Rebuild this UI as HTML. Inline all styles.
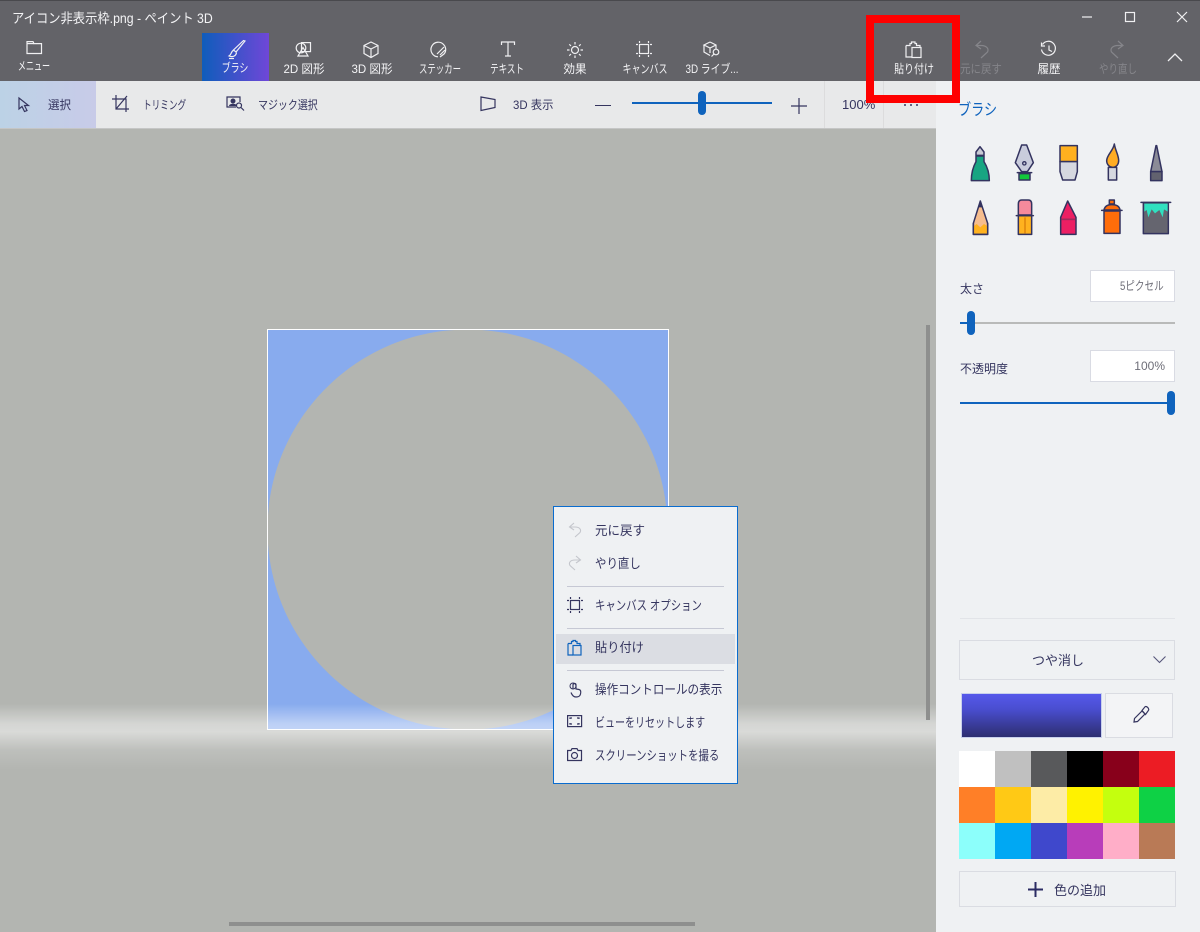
<!DOCTYPE html>
<html lang="ja"><head><meta charset="utf-8"><title>ペイント 3D</title>
<style>
html,body{margin:0;padding:0;width:1200px;height:932px;overflow:hidden;background:#b3b5b1}
body{position:relative;font-family:"Liberation Sans","Noto Sans CJK JP",sans-serif;font-size:12px;color:#35355f}
.a{position:absolute}
.t{position:absolute;white-space:nowrap;line-height:14px}
.s{transform-origin:0 50%}
svg{position:absolute;overflow:visible;fill:none}
.w{color:#f4f4f6}
.w2{stroke:#f0f0f2;stroke-width:1.2}
.d{stroke:#35355f;stroke-width:1.2}
.m{font-size:13px;color:#35355f;left:595px;transform-origin:0 50%}
.sw{position:absolute;width:36px;height:36px}
.sep{position:absolute;left:567px;width:157px;height:1px;background:#c6c8d4}
.o{stroke:#33335f;stroke-width:4.500;stroke-linejoin:round;stroke-linecap:round}
</style></head><body>

<!-- canvas -->
<svg style="left:0;top:128px" width="936" height="804" viewBox="0 128 936 804">
<defs>
<linearGradient id="glow" x1="0" y1="0" x2="0" y2="1">
<stop offset="0" stop-color="#fff" stop-opacity="0"/>
<stop offset=".3" stop-color="#fff" stop-opacity=".44"/>
<stop offset=".42" stop-color="#fff" stop-opacity=".5"/>
<stop offset=".7" stop-color="#fff" stop-opacity=".14"/>
<stop offset="1" stop-color="#fff" stop-opacity="0"/>
</linearGradient>
</defs>
<rect x="0" y="128" width="936" height="804" fill="#b3b5b1"/>
<path fill-rule="evenodd" fill="#88abee" d="M267 329H669V730H267ZM467.500 329.500C357 329.500 267.500 419 267.500 529.500S357 729.500 467.500 729.500S667.500 640 667.500 529.500S578 329.500 467.500 329.500Z"/>
<rect x="0" y="704" width="936" height="66" fill="url(#glow)"/>
<rect x="267.500" y="329.500" width="401" height="400" stroke="#fff" stroke-width="1"/>
<rect x="926" y="325" width="4" height="395" fill="#8e8f8e"/>
<rect x="229" y="922" width="466" height="4" fill="#8e8f8e"/>
</svg>

<!-- title / tab bar -->
<div class="a" style="left:0;top:0;width:1200px;height:81px;background:#636368;border-top:1px solid #49494d;box-sizing:border-box"></div>
<div class="t w s" style="left:12px;top:10px;font-size:13.500px;line-height:17px;transform:scaleX(.91)">アイコン非表示枠.png - ペイント 3D</div>

<svg style="left:1000px;top:0" width="200" height="34">
<path class="w2" d="M82 17H92"/><rect class="w2" x="125.500" y="12.500" width="9" height="9"/><path class="w2" d="M177 12L187 22M187 12L177 22"/>
</svg>

<!-- menu -->
<svg style="left:26px;top:41px" width="18" height="14"><path class="w2" d="M1 .6H7L8 2.600H15.500V12.500H1Z"/><path class="w2" d="M1 2.600H8"/></svg>
<div class="t w" style="left:34px;top:59px;transform:translateX(-50%) scaleX(.67)">メニュー</div>

<!-- brush active -->
<div class="a" style="left:202px;top:33px;width:67px;height:48px;background:linear-gradient(90deg,#0f5dbb,#6f47d8)"></div>
<svg style="left:226px;top:40px" width="22" height="22"><path class="w2" d="M19 1L10 12L7.500 10L17.500 .5ZM7.500 10.500C5 11 6 14 3 16C7 17.500 10 16 10.500 12.500"/><path class="w2" d="M3 18.500H8"/></svg>
<div class="t w" style="left:235px;top:61px;transform:translateX(-50%) scaleX(.75)">ブラシ</div>

<!-- 2D -->
<svg style="left:295px;top:42px" width="18" height="16"><circle class="w2" cx="6" cy="6" r="4.800"/><rect class="w2" x="6.500" y=".6" width="9" height="9"/><path class="w2" d="M8 5.500L13 14H3Z"/></svg>
<div class="t w" style="left:304px;top:62px;transform:translateX(-50%) scaleX(.96)">2D 図形</div>
<!-- 3D -->
<svg style="left:363px;top:41px" width="16" height="18"><path class="w2" d="M8 1L15 4.500V12.500L8 16.500L1 12.500V4.500ZM1 4.500L8 8L15 4.500M8 8V16.500"/></svg>
<div class="t w" style="left:372px;top:62px;transform:translateX(-50%) scaleX(.96)">3D 図形</div>
<!-- sticker -->
<svg style="left:430px;top:41px" width="18" height="18"><path class="w2" d="M14 4A7.300 7.300 0 1 0 8 15.800M14 4C16.500 7 16 11 14 13L10 16"/><path class="w2" d="M7 13L14 6M10 14L15 9"/></svg>
<div class="t w" style="left:440px;top:62px;transform:translateX(-50%) scaleX(.7)">ステッカー</div>
<!-- text -->
<svg style="left:500px;top:41px" width="16" height="16"><path class="w2" d="M1.500 4V1H14.500V4M8 1V15M5 15H11"/></svg>
<div class="t w" style="left:507px;top:62px;transform:translateX(-50%) scaleX(.71)">テキスト</div>
<!-- effects -->
<svg style="left:566px;top:41px" width="18" height="18"><circle class="w2" cx="9" cy="9" r="3.500"/><path class="w2" d="M9 1V3.500M9 14.500V17M1 9H3.500M14.500 9H17M3.300 3.300L5 5M13 13L14.700 14.700M14.700 3.300L13 5M5 13L3.300 14.700"/></svg>
<div class="t w" style="left:575px;top:62px;transform:translateX(-50%) scaleX(.96)">効果</div>
<!-- canvas tool -->
<svg style="left:636px;top:41px" width="16" height="16"><rect class="w2" x="3.500" y="3.500" width="9" height="9"/><path class="w2" d="M3.500 0V2M12.500 0V2M3.500 14V16M12.500 14V16M0 3.500H2M0 12.500H2M14 3.500H16M14 12.500H16"/></svg>
<div class="t w" style="left:644.500px;top:62px;transform:translateX(-50%) scaleX(.75)">キャンバス</div>
<!-- 3D library -->
<svg style="left:703px;top:41px" width="18" height="18"><path class="w2" d="M7 1L13 4V8M1 4V11L7 14.500M7 1L1 4L7 7L13 4M7 7V12"/><circle class="w2" cx="13" cy="11" r="2.800"/><path class="w2" d="M11 13L8.500 15.500"/></svg>
<div class="t w" style="left:712px;top:62px;transform:translateX(-50%) scaleX(.82)">3D ライブ...</div>

<!-- right tools -->
<svg style="left:905px;top:41px" width="18" height="18"><path class="w2" d="M1 4.500H5V2.500H6.500V1H10V2.500H11.500V4.500H15V6M7 16H1V4.500"/><rect class="w2" x="7" y="6.500" width="9" height="10"/></svg>
<div class="t w" style="left:914px;top:62px;transform:translateX(-50%) scaleX(.83)">貼り付け</div>
<svg style="left:973px;top:40px" width="18" height="20"><path d="M8 1L3 5.500L8 9M3 5.500H8C14 5.500 16 9 14.500 12L8 18" stroke="#85858a" stroke-width="1.200"/></svg>
<div class="t" style="left:981px;top:62px;color:#85858a;transform:translateX(-50%) scaleX(.87)">元に戻す</div>
<svg style="left:1040px;top:41px" width="18" height="18"><path class="w2" d="M2.500 3.500A7 7 0 1 1 1.500 8.500M1.500 1.500V5H5M9 4.500V9L12 10.500"/></svg>
<div class="t w" style="left:1049px;top:62px;transform:translateX(-50%) scaleX(.96)">履歴</div>
<svg style="left:1108px;top:40px" width="18" height="20"><path d="M10 1L15 5.500L10 9M15 5.500H10C4 5.500 2 9 3.500 12L10 18" stroke="#85858a" stroke-width="1.200"/></svg>
<div class="t" style="left:1118px;top:62px;color:#85858a;transform:translateX(-50%) scaleX(.79)">やり直し</div>
<svg style="left:1167px;top:52px" width="16" height="10"><path d="M1 9L8 2L15 9" stroke="#f0f0f2" stroke-width="1.300"/></svg>

<!-- toolbar -->
<div class="a" style="left:0;top:81px;width:936px;height:47px;background:#e8e9ea;border-bottom:1px solid #c5c6c6"></div>
<div class="a" style="left:0;top:81px;width:96px;height:47px;background:linear-gradient(90deg,#bcd2e6,#c8cbe8)"></div>
<svg style="left:18px;top:97px" width="12" height="16"><path class="d" d="M1 1V12L4 9.500L6.500 14.500L9 13.500L6.500 8.500H10.500Z"/></svg>
<div class="t s" style="left:48px;top:98px;transform:scaleX(.96)">選択</div>
<svg style="left:112px;top:95px" width="18" height="18"><path class="d" d="M4 0V14H17M0 4H14V17M4 14L15 1"/></svg>
<div class="t s" style="left:143px;top:98px;transform:scaleX(.72)">トリミング</div>
<svg style="left:226px;top:96px" width="19" height="16"><path class="d" d="M10 11H1V1H14V6"/><circle cx="7" cy="5" r="2.500" fill="#35355f"/><path d="M3 10C3 7 11 7 11 10Z" fill="#35355f"/><circle class="d" cx="13" cy="9.500" r="2.500"/><path class="d" d="M15 11.500L18 14.500"/></svg>
<div class="t s" style="left:258px;top:98px;transform:scaleX(.83)">マジック選択</div>
<svg style="left:480px;top:96px" width="17" height="16"><path class="d" d="M1 1L15 3.500V11.500L1 14.500Z"/></svg>
<div class="t s" style="left:513px;top:98px;transform:scaleX(.95)">3D 表示</div>
<div class="a" style="left:595px;top:105px;width:16px;height:1px;background:#35355f"></div>
<div class="a" style="left:632px;top:102px;width:140px;height:2px;background:#0f63bd"></div>
<div class="a" style="left:698px;top:91px;width:8px;height:24px;border-radius:4px;background:#0f63bd"></div>
<svg style="left:791px;top:98px" width="16" height="16"><path d="M8 0V16M0 8H16" stroke="#35355f" stroke-width="1.200"/></svg>
<div class="a" style="left:824px;top:81px;width:1px;height:47px;background:#dcdcdd"></div>
<div class="t" style="left:842px;top:98px;font-size:13px">100%</div>
<div class="a" style="left:883px;top:81px;width:1px;height:47px;background:#dcdcdd"></div>
<svg style="left:904px;top:104px" width="14" height="3"><path d="M0 1H2M6 1H8M12 1H14" stroke="#35355f" stroke-width="1.600"/></svg>

<!-- side panel -->
<div class="a" style="left:936px;top:81px;width:264px;height:851px;background:#eff1f3"></div>
<div class="t s" style="left:958px;top:101px;font-size:16px;line-height:20px;color:#0f63bd;transform:scaleX(.82)">ブラシ</div>

<!-- brushes: drawn in 3x coordinates -->
<svg style="left:940px;top:130px" width="260" height="120" viewBox="0 0 780 360">
 <path class="o" fill="#18a582" d="M108 78H132V95Q148 120 148 152H94Q94 120 108 95Z"/><path class="o" fill="#c8cad4" d="M108 76V66L120 50L132 66V76Z"/>
 <path class="o" fill="#c9ccdc" d="M245 45H260L280 98L262 125H245L226 98Z"/><circle cx="253" cy="100" r="5" stroke="#33335f" stroke-width="4"/><path class="o" d="M232 128H275"/><path class="o" fill="#12c83c" d="M237 131H270V150H237Z"/>
 <path class="o" fill="#ffb01f" d="M360 47H412V95H360Z"/><path class="o" fill="#d6d8e0" d="M360 95H412V125L405 150H368L360 125Z"/>
 <path class="o" fill="#ffac24" d="M523 42C520 62 500 75 500 92C500 105 510 112 518 112C530 112 536 102 536 92C536 75 526 62 523 42Z"/><path class="o" fill="#d6d8e0" d="M505 112H530V150H505Z"/>
 <path class="o" fill="#8b8b97" d="M648 47L632 125H666L650 47Z"/><path class="o" fill="#62626f" d="M632 125H666V152H632Z"/>
 <path class="o" fill="#f6bd8e" d="M121 213L100 280V313H143V280Z"/><path fill="#ffb21f" d="M102 288L110 282L121 292L132 282L141 288V311H102Z"/><path fill="#33335f" d="M115 232L121 213L127 232Z"/><path class="o" d="M100 280V313H143V280"/>
 <path class="o" fill="#f58a9c" d="M235 255V222Q235 210 245 210H265Q275 210 275 222V255Z"/><path class="o" fill="#ffb21f" d="M235 257H275V313H235Z"/><path class="o" d="M229 257H280"/><path d="M255 262V310" stroke="#e2890f" stroke-width="5"/>
 <path class="o" fill="#ec1f63" d="M383 213L362 262V313H408V262Z"/><path d="M364 268H406" stroke="#a02b5b" stroke-width="5"/>
 <path class="o" fill="#ff6d0a" d="M508 210H523V222H508Z"/><path class="o" fill="#ff6d0a" d="M492 240Q495 224 515 224Q538 224 540 240Z"/><path class="o" fill="#ff6d0a" d="M492 243H540V310H492Z"/><path class="o" d="M485 241H546"/>
 <path class="o" fill="#65656f" d="M610 218H685V311H610Z"/><path fill="#30e0c0" d="M613 221H683V245L672 238L668 262L658 240L645 250L635 238L625 262L620 240L613 245Z"/><path class="o" d="M603 217H692"/>
</svg>

<div class="t" style="left:960px;top:282px">太さ</div>
<div class="a" style="left:1090px;top:270px;width:85px;height:32px;background:#fff;border:1px solid #d9dbe3;box-sizing:border-box"></div>
<div class="t" style="right:36px;top:279px;color:#6e6e78;transform-origin:100% 50%;transform:scaleX(.8)">5ピクセル</div>
<div class="a" style="left:960px;top:322px;width:215px;height:2px;background:#b9bab9"></div>
<div class="a" style="left:960px;top:322px;width:10px;height:2px;background:#0f63bd"></div>
<div class="a" style="left:967px;top:311px;width:8px;height:24px;border-radius:4px;background:#0f63bd"></div>

<div class="t" style="left:960px;top:362px">不透明度</div>
<div class="a" style="left:1090px;top:350px;width:85px;height:32px;background:#fff;border:1px solid #d9dbe3;box-sizing:border-box"></div>
<div class="t" style="right:35px;top:359px;color:#6e6e78">100%</div>
<div class="a" style="left:960px;top:402px;width:215px;height:2px;background:#0f63bd"></div>
<div class="a" style="left:1167px;top:391px;width:8px;height:24px;border-radius:4px;background:#0f63bd"></div>

<div class="a" style="left:960px;top:618px;width:215px;height:1px;background:#e2e4e8"></div>

<div class="a" style="left:959px;top:640px;width:216px;height:40px;border:1px solid #dadce2;box-sizing:border-box"></div>
<div class="t" style="left:1032px;top:654px;font-size:13px">つや消し</div>
<svg style="left:1153px;top:656px" width="13" height="8"><path d="M.5 .5L6.500 6.500L12.500 .5" stroke="#55557a" stroke-width="1.100"/></svg>

<div class="a" style="left:961px;top:693px;width:141px;height:45px;box-sizing:border-box;border:1px solid #c8d0ec;background:linear-gradient(180deg,#5558ea,#4a4ed0 35%,#2d2e70)"></div>
<div class="a" style="left:1105px;top:693px;width:68px;height:45px;box-sizing:border-box;border:1px solid #dadce2;background:#f3f4f6"></div>
<svg style="left:1133px;top:706px" width="17" height="17"><path class="d" d="M1 16L1.500 12.500L9 5L12 8L4.500 15.500Z"/><path d="M9 4.500L12 .8C13.500 -.4 16.500 2.500 15.500 4.300L12.500 8.500Z" stroke="#35355f" stroke-width="1.200"/></svg>

<div class="sw" style="left:959px;top:751px;background:#fff"></div>
<div class="sw" style="left:995px;top:751px;background:#c0c0c0"></div>
<div class="sw" style="left:1031px;top:751px;background:#58595b"></div>
<div class="sw" style="left:1067px;top:751px;background:#000"></div>
<div class="sw" style="left:1103px;top:751px;background:#88001b"></div>
<div class="sw" style="left:1139px;top:751px;background:#ec1c24"></div>
<div class="sw" style="left:959px;top:787px;background:#ff7f27"></div>
<div class="sw" style="left:995px;top:787px;background:#ffc915"></div>
<div class="sw" style="left:1031px;top:787px;background:#fdeca6"></div>
<div class="sw" style="left:1067px;top:787px;background:#fff200"></div>
<div class="sw" style="left:1103px;top:787px;background:#c4ff0e"></div>
<div class="sw" style="left:1139px;top:787px;background:#0ed145"></div>
<div class="sw" style="left:959px;top:823px;background:#8cfffb"></div>
<div class="sw" style="left:995px;top:823px;background:#00a8f3"></div>
<div class="sw" style="left:1031px;top:823px;background:#3f48cc"></div>
<div class="sw" style="left:1067px;top:823px;background:#b83dba"></div>
<div class="sw" style="left:1103px;top:823px;background:#ffaec8"></div>
<div class="sw" style="left:1139px;top:823px;background:#b97a56"></div>

<div class="a" style="left:959px;top:871px;width:217px;height:36px;border:1px solid #dadce2;box-sizing:border-box"></div>
<svg style="left:1028px;top:882px" width="15" height="15"><path d="M7.500 0V15M0 7.500H15" stroke="#2b2b63" stroke-width="2"/></svg>
<div class="t" style="left:1054px;top:884px;font-size:13px">色の追加</div>

<!-- context menu -->
<div class="a" style="left:553px;top:506px;width:185px;height:278px;box-sizing:border-box;background:#eff1f3;border:1px solid #0a6ccf"></div>
<svg style="left:568px;top:522px" width="14" height="16"><path d="M6 1L1.500 5L6 8M1.500 5H7C12 5 13.500 8 12 10.500L7 15" stroke="#c4c6cc" stroke-width="1.100"/></svg>
<div class="t m" style="top:524px;transform:scaleX(.96)">元に戻す</div>
<svg style="left:568px;top:555px" width="14" height="16"><path d="M8 1L12.500 5L8 8M12.500 5H7C2 5 .5 8 2 10.500L7 15" stroke="#c4c6cc" stroke-width="1.100"/></svg>
<div class="t m" style="top:557px;transform:scaleX(.88)">やり直し</div>
<div class="sep" style="top:586px"></div>
<svg style="left:567px;top:597px" width="16" height="16"><rect class="d" x="3.500" y="3.500" width="9" height="9"/><path class="d" d="M3.500 0V2M12.500 0V2M3.500 14V16M12.500 14V16M0 3.500H2M0 12.500H2M14 3.500H16M14 12.500H16"/></svg>
<div class="t m" style="top:599px;transform:scaleX(.8)">キャンバス オプション</div>
<div class="sep" style="top:628px"></div>
<div class="a" style="left:556px;top:634px;width:179px;height:30px;background:#dbdde3"></div>
<svg style="left:567px;top:640px" width="15" height="16"><path d="M1 3.500H4.500V1.500H6V.5H8.500V1.500H10V3.500H13V5M6 15H1V3.500" stroke="#0f63bd" stroke-width="1.200"/><rect x="6" y="5.500" width="8" height="9.500" stroke="#0f63bd" stroke-width="1.200"/></svg>
<div class="t m" style="top:641px;transform:scaleX(.94)">貼り付け</div>
<div class="sep" style="top:670px"></div>
<svg style="left:569px;top:682px" width="13" height="16"><path class="d" d="M4 7V3C4 1 7 1 7 3V7L10 7.500C12 8 12 10 11.500 12C11 14.500 9.500 15 7 15C4.500 15 3 13 2 10.500"/><circle cx="4" cy="4" r="3" stroke="#35355f" stroke-width="1"/></svg>
<div class="t m" style="top:683px;transform:scaleX(.89)">操作コントロールの表示</div>
<svg style="left:567px;top:715px" width="16" height="14"><rect class="d" x=".6" y=".6" width="14" height="11"/><path class="d" d="M3 4V3H5M10 3H12V4M3 8V9H5M10 9H12V8"/></svg>
<div class="t m" style="top:716px;transform:scaleX(.77)">ビューをリセットします</div>
<svg style="left:567px;top:748px" width="16" height="14"><path class="d" d="M.6 2.500H4L5 .6H10L11 2.500H14.500V12.500H.6Z"/><circle class="d" cx="7.500" cy="7.500" r="3"/></svg>
<div class="t m" style="top:749px;transform:scaleX(.8)">スクリーンショットを撮る</div>

<!-- red annotation -->
<div class="a" style="left:866px;top:15px;width:94px;height:88px;box-sizing:border-box;border:8.500px solid #fe0000"></div>
</body></html>
